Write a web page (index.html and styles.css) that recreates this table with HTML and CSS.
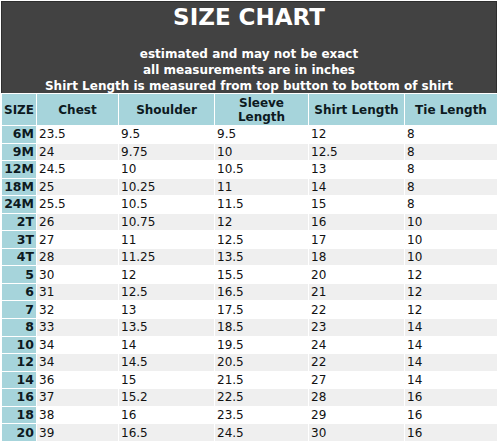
FILE: index.html
```html
<!DOCTYPE html>
<html>
<head>
<meta charset="utf-8">
<link rel="stylesheet" href="styles.css">
</head>
<body>
<div class="chart">
  <div class="banner">
    <h1 class="title">SIZE CHART</h1>
    <p class="note">estimated and may not be exact<br>all measurements are in inches<br>Shirt Length is measured from top button to bottom of shirt</p>
  </div>
  <table class="sizes">
    <colgroup>
      <col class="c-size"><col class="c-chest"><col class="c-shoulder"><col class="c-sleeve"><col class="c-shirt"><col class="c-tie">
    </colgroup>
    <thead>
      <tr><th>SIZE</th><th>Chest</th><th>Shoulder</th><th>Sleeve<br>Length</th><th>Shirt Length</th><th>Tie Length</th></tr>
    </thead>
    <tbody>
      <tr><th>6M</th><td>23.5</td><td>9.5</td><td>9.5</td><td>12</td><td>8</td></tr>
      <tr><th>9M</th><td>24</td><td>9.75</td><td>10</td><td>12.5</td><td>8</td></tr>
      <tr><th>12M</th><td>24.5</td><td>10</td><td>10.5</td><td>13</td><td>8</td></tr>
      <tr><th>18M</th><td>25</td><td>10.25</td><td>11</td><td>14</td><td>8</td></tr>
      <tr><th>24M</th><td>25.5</td><td>10.5</td><td>11.5</td><td>15</td><td>8</td></tr>
      <tr><th>2T</th><td>26</td><td>10.75</td><td>12</td><td>16</td><td>10</td></tr>
      <tr><th>3T</th><td>27</td><td>11</td><td>12.5</td><td>17</td><td>10</td></tr>
      <tr><th>4T</th><td>28</td><td>11.25</td><td>13.5</td><td>18</td><td>10</td></tr>
      <tr><th>5</th><td>30</td><td>12</td><td>15.5</td><td>20</td><td>12</td></tr>
      <tr><th>6</th><td>31</td><td>12.5</td><td>16.5</td><td>21</td><td>12</td></tr>
      <tr><th>7</th><td>32</td><td>13</td><td>17.5</td><td>22</td><td>12</td></tr>
      <tr><th>8</th><td>33</td><td>13.5</td><td>18.5</td><td>23</td><td>14</td></tr>
      <tr><th>10</th><td>34</td><td>14</td><td>19.5</td><td>24</td><td>14</td></tr>
      <tr><th>12</th><td>34</td><td>14.5</td><td>20.5</td><td>22</td><td>14</td></tr>
      <tr><th>14</th><td>36</td><td>15</td><td>21.5</td><td>27</td><td>14</td></tr>
      <tr><th>16</th><td>37</td><td>15.2</td><td>22.5</td><td>28</td><td>16</td></tr>
      <tr><th>18</th><td>38</td><td>16</td><td>23.5</td><td>29</td><td>16</td></tr>
      <tr><th>20</th><td>39</td><td>16.5</td><td>24.5</td><td>30</td><td>16</td></tr>
    </tbody>
  </table>
</div>
</body>
</html>
```
FILE: styles.css
```css
html, body {
  margin: 0;
  padding: 0;
  background: #ffffff;
}
.chart {
  width: 496px;
  margin: 1px 0 0 1px;
  font-family: "DejaVu Sans", Verdana, sans-serif;
}
.banner {
  background: #424242;
  border: 1px solid #2e2e2e;
  border-bottom: none;
  height: 92px;
  box-sizing: border-box;
  color: #ffffff;
  text-align: center;
  padding-top: 1px;
}
.title {
  margin: 0;
  font-size: 23px;
  font-weight: bold;
  line-height: 28px;
}
.note {
  margin: 15px 0 0;
  font-size: 12px;
  font-weight: bold;
  line-height: 16px;
}
.sizes {
  width: 496px;
  table-layout: fixed;
  border-collapse: collapse;
  font-size: 12px;
  color: #111;
}
.c-size { width: 35px; }
.c-chest { width: 82px; }
.c-shoulder { width: 96px; }
.c-sleeve { width: 94px; }
.c-shirt { width: 96px; }
.c-tie { width: 93px; }
.sizes th, .sizes td {
  border: 1px solid #ffffff;
  padding: 0;
}
.sizes thead th {
  background: #a6d4db;
  height: 31px;
  font-size: 12px;
  font-weight: bold;
  line-height: 14px;
  color: #0d1a1f;
}
.sizes tbody tr {
  height: 17.55px;
}
.sizes tbody th {
  background: #a6d4db;
  text-align: right;
  padding-right: 2px;
  font-weight: bold;
  font-size: 12.5px;
  color: #0d1a1f;
  line-height: 14px;
}
.sizes tbody td {
  background: #ffffff;
  padding-left: 2px;
  line-height: 14px;
}
.sizes tbody tr:nth-child(even) td {
  background: #efefef;
}
```
